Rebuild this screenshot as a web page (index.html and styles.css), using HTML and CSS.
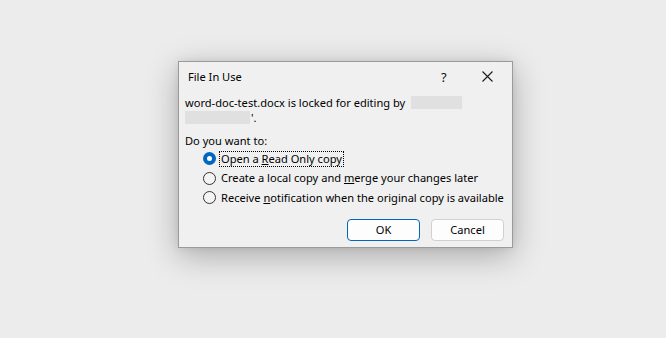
FILE: index.html
```html
<!DOCTYPE html>
<html>
<head>
<meta charset="utf-8">
<link rel="stylesheet" href="styles.css">
</head>
<body>
<div class="stage">
  <div class="dialog">
    <div class="titlebar">
      <span class="title">File In Use</span>
      <span class="help">?</span>
      <span class="close"><svg width="11" height="11" viewBox="0 0 11 11"><path d="M0.5 0.5L10.5 10.5M10.5 0.5L0.5 10.5" stroke="#1a1a1a" stroke-width="1.1" fill="none"/></svg></span>
    </div>
    <div class="content">
      <div class="msg">
        <div class="line">word-doc-test.docx is locked for editing by <span class="redact r1"></span></div>
        <div class="line"><span class="redact r2"></span><span class="tick">'.</span></div>
      </div>
      <div class="question">Do you want to:</div>
      <div class="options">
        <div class="opt"><span class="radio on"></span><span class="lbl focus">Open a <u>R</u>ead Only copy</span></div>
        <div class="opt"><span class="radio"></span><span class="lbl">Create a local copy and <u>m</u>erge your changes later</span></div>
        <div class="opt"><span class="radio"></span><span class="lbl">Receive <u>n</u>otification when the original copy is available</span></div>
      </div>
      <div class="buttons">
        <button class="btn primary">OK</button>
        <button class="btn">Cancel</button>
      </div>
    </div>
  </div>
</div>
</body>
</html>
```
FILE: styles.css
```css
html, body {
  margin: 0;
  padding: 0;
  background: #ececec;
  width: 666px;
  height: 338px;
  overflow: hidden;
  font-family: "Segoe UI", "Noto Sans", "Open Sans", sans-serif;
  font-size: 11.1px;
  color: #000;
}
.stage {
  padding: 61px 0 0 178px;
}
.dialog {
  width: 333px;
  height: 185px;
  background: #f0f0f0;
  border: 1px solid #9a9a9a;
  box-shadow: 0 8px 30px rgba(0,0,0,0.28), 0 0 8px rgba(0,0,0,0.08);
  display: flex;
  flex-direction: column;
}
.titlebar {
  height: 29px;
  display: flex;
  align-items: center;
  padding-left: 9px;
}
.title {
  flex: 1;
}
.help {
  width: 20px;
  font-size: 13px;
  margin-right: 21px;
  color: #111;
}
.close {
  width: 20px;
  margin-right: 10px;
  display: flex;
  align-items: center;
}
.content {
  padding: 4px 0 0 6px;
  display: flex;
  flex-direction: column;
}
.line {
  height: 15px;
  line-height: 15px;
  display: flex;
  align-items: center;
  white-space: pre;
}
.redact {
  display: inline-block;
  background: #e0e0e0;
  height: 13px;
}
.r1 { width: 51px; margin-left: 3px; }
.r2 { width: 65px; }
.tick { color: #000; margin-left: 1px; }
.question {
  margin-top: 8px;
  height: 16px;
  line-height: 16px;
}
.options {
  padding-left: 18px;
  display: flex;
  flex-direction: column;
}
.opt {
  height: 19.5px;
  display: flex;
  align-items: center;
  white-space: nowrap;
}
.radio {
  width: 11px;
  height: 11px;
  border-radius: 50%;
  border: 1px solid #333;
  background: #f4f4f4;
  margin-right: 3px;
  box-sizing: content-box;
  flex: none;
}
.radio.on {
  width: 5px;
  height: 5px;
  border: 4px solid #0067c0;
  background: #fff;
}
.lbl {
  padding: 0 1px;
  border: 1px dotted transparent;
  line-height: 14px;
}
.lbl.focus {
  border-color: #000;
}
.buttons {
  display: flex;
  justify-content: flex-end;
  gap: 11px;
  padding-right: 8px;
  margin-top: 11px;
}
.btn {
  width: 73px;
  height: 22px;
  background: #fdfdfd;
  border: 1px solid #d0d0d0;
  border-radius: 4px;
  font-family: inherit;
  font-size: 11.1px;
  color: #000;
  padding: 0;
}
.btn.primary {
  border-color: #0067c0;
}
```
